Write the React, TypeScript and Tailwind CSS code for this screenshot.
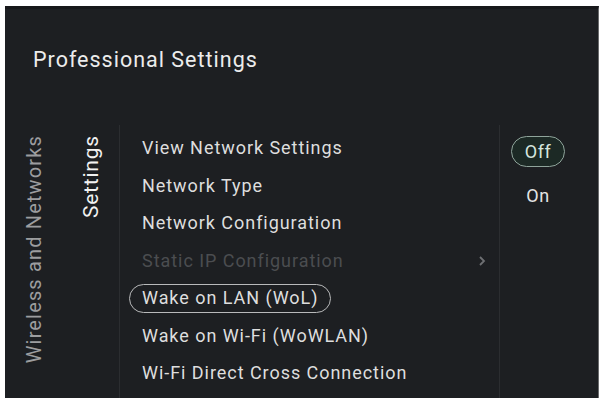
import React from "react";

const items = [
  { label: "View Network Settings" },
  { label: "Network Type" },
  { label: "Network Configuration" },
  { label: "Static IP Configuration", disabled: true, chevron: true },
  { label: "Wake on LAN (WoL)", focused: true },
  { label: "Wake on Wi-Fi (WoWLAN)" },
  { label: "Wi-Fi Direct Cross Connection" },
];

export default function App() {
  return (
    <div className="w-[604px] h-[398px] bg-white pl-[5px] pt-[6px] pr-[5px] overflow-hidden" style={{ fontFamily: "Roboto, 'Liberation Sans', sans-serif" }}>
      <div className="h-full bg-[#1d1f22] border-t-[3px] border-[#17181a] border-r border-r-[#6a6b6d] flex flex-col">
        <div className="h-[116px] pl-[28px] pt-[40px]">
          <div className="text-[21.5px] text-[#ececec] leading-none tracking-[1px]">Professional Settings</div>
        </div>
        <div className="flex-1 flex">
          <div className="w-[57px] flex justify-center pt-[10px]">
            <div className="[writing-mode:vertical-rl] rotate-180 text-[20px] leading-none text-[#9c9d9f] h-fit tracking-[1.15px]">
              Wireless and Networks
            </div>
          </div>
          <div className="w-[57px] flex justify-center pt-[10px] pl-[2px]">
            <div className="[writing-mode:vertical-rl] rotate-180 text-[21px] leading-none text-[#f2f2f2] h-fit tracking-[0.8px]">
              Settings
            </div>
          </div>
          <div className="w-[381px] border-l border-[#2b2d30] border-r flex flex-col pt-[4.5px]">
            {items.map((it) => (
              <div key={it.label} className="h-[37.5px] flex items-center pl-[9px] pr-[13px]">
                <div
                  className={
                    "flex items-center h-[29px] px-[12px] rounded-full text-[18px] leading-none tracking-[0.95px] border-[1.5px] " +
                    (it.focused ? "border-[#b9babb] " : "border-transparent ") +
                    (it.disabled ? "text-[#4b4d50]" : "text-[#dedede]")
                  }
                >
                  {it.label}
                </div>
                {it.chevron && (
                  <svg className="ml-auto" width="8" height="12" viewBox="0 0 8 12">
                    <path d="M2 2 L6 6 L2 10" fill="none" stroke="#6e7073" strokeWidth="1.8" />
                  </svg>
                )}
              </div>
            ))}
          </div>
          <div className="flex-1 flex flex-col pl-[11px] pt-[11px]">
            <div className="w-[54px] h-[31px] rounded-full border-[1.5px] border-[#8fa49b] bg-[#1c2925] flex items-center justify-center text-[18px] leading-none text-[#d6e6df] tracking-[0.5px]">
              Off
            </div>
            <div className="w-[54px] h-[29px] mt-[14px] flex items-center justify-center text-[18px] leading-none text-[#e4e4e4] tracking-[0.5px]">
              On
            </div>
          </div>
        </div>
      </div>
    </div>
  );
}
